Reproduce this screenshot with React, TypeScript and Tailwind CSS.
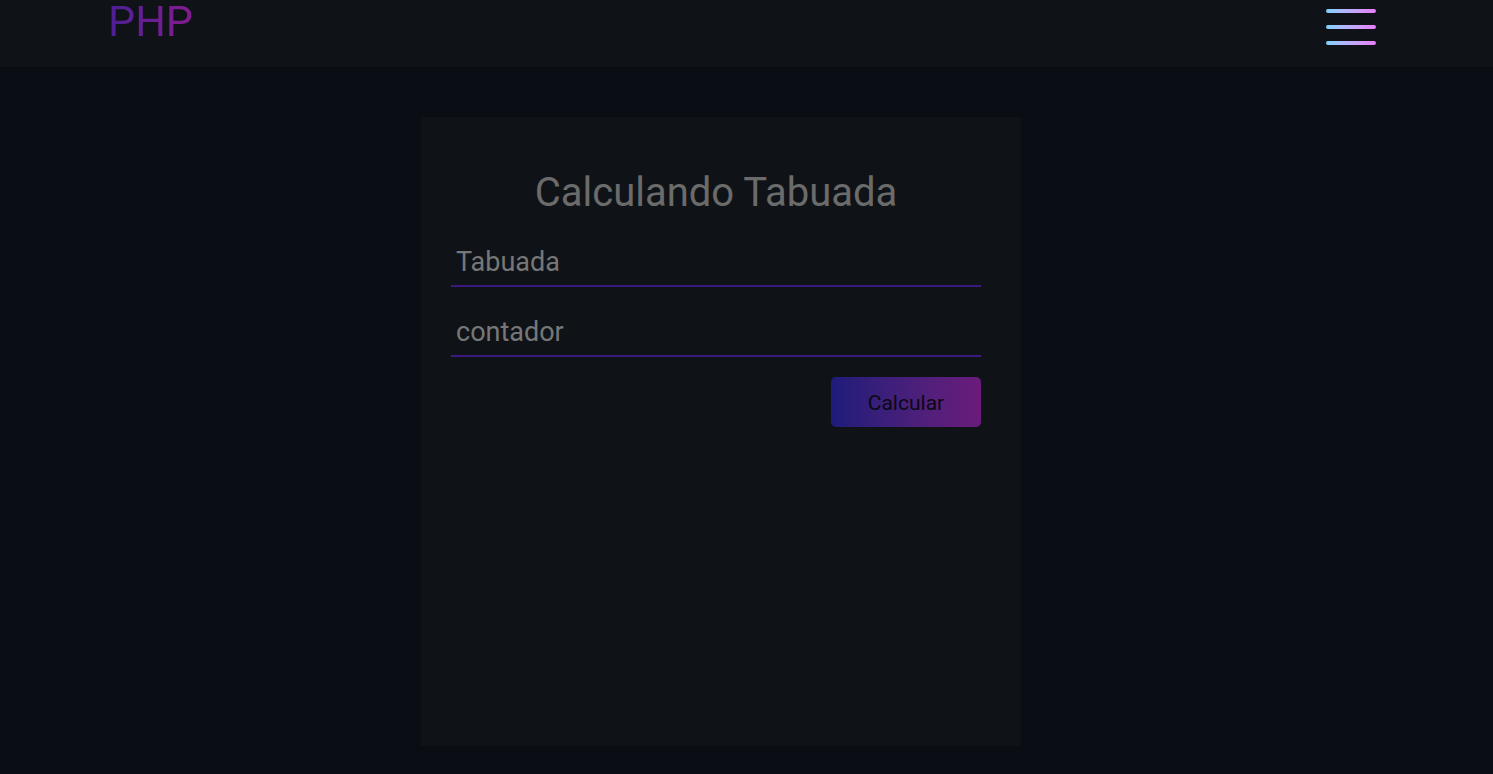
import { useState } from "react";

function Hamburger() {
  return (
    <button className="flex flex-col gap-[12px] w-[50px]" aria-label="menu">
      {[0, 1, 2].map((i) => (
        <span
          key={i}
          className="block h-[4px] w-full rounded-full bg-gradient-to-r from-[#7dd3fc] to-[#e879f9]"
        />
      ))}
    </button>
  );
}

export default function App() {
  const [tabuada, setTabuada] = useState("");
  const [contador, setContador] = useState("");

  return (
    <div className="min-h-[774px] bg-[#0a0d14] font-['Roboto',sans-serif]">
      <header className="h-[67px] bg-[#0f1317] flex items-start justify-between pl-[108px] pr-[117px]">
        <span className="text-[43px] leading-none bg-gradient-to-r from-[#4c1d95] to-[#86198f] bg-clip-text text-transparent">
          PHP
        </span>
        <div className="pt-[9px]">
          <Hamburger />
        </div>
      </header>

      <main className="flex justify-center pt-[50px] pr-[51px]">
        <div className="w-[600px] h-[629px] bg-[#0f1317] pl-[30px] pr-[40px] pt-[51px]">
          <h1 className="text-center text-[40px] leading-[50px] text-[#6b6b6b]">
            Calculando Tabuada
          </h1>
          <form className="mt-[25px] flex flex-col" onSubmit={(e) => e.preventDefault()}>
            <input
              value={tabuada}
              onChange={(e) => setTabuada(e.target.value)}
              placeholder="Tabuada"
              className="h-[44px] pb-[4px] bg-transparent border-b-2 border-[#3b1a80] px-[5px] text-[27px] text-[#777] placeholder:text-[#777] outline-none"
            />
            <input
              value={contador}
              onChange={(e) => setContador(e.target.value)}
              placeholder="contador"
              className="mt-[26px] h-[44px] pb-[4px] bg-transparent border-b-2 border-[#3b1a80] px-[5px] text-[27px] text-[#777] placeholder:text-[#777] outline-none"
            />
            <div className="flex justify-end mt-[20px]">
              <button
                type="submit"
                className="w-[150px] h-[50px] pt-[3px] rounded-[5px] bg-gradient-to-r from-[#1e1b7a] to-[#6b1a7a] text-[21px] text-[#0a0814]"
              >
                Calcular
              </button>
            </div>
          </form>
        </div>
      </main>
    </div>
  );
}
